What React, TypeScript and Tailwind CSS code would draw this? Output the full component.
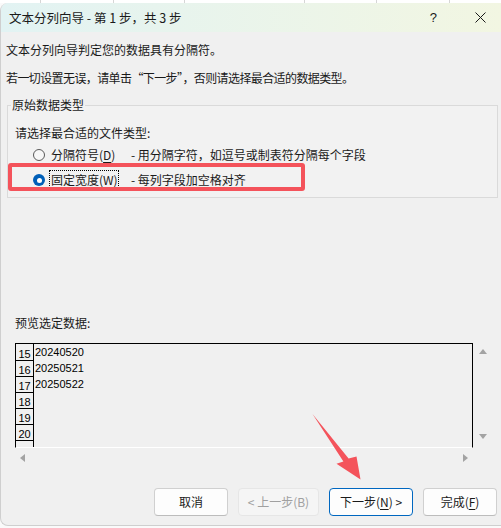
import React from 'react'

const cjk = "font-['Microsoft_YaHei','Noto_Sans_CJK_SC',sans-serif]"

const Radio: React.FC<{ checked?: boolean }> = ({ checked }) =>
  checked ? (
    <span className="flex h-[12px] w-[12px] shrink-0 items-center justify-center rounded-full bg-[#005fb8]">
      <span className="h-[5px] w-[5px] rounded-full bg-white" />
    </span>
  ) : (
    <span className="h-[12px] w-[12px] shrink-0 rounded-full border border-[#5a5a5a] bg-[#f7f7f7]" />
  )

const Tri: React.FC<{ dir: 'up' | 'down' | 'left' | 'right' }> = ({ dir }) => {
  const pts = {
    up: '0,5 4,0 8,5',
    down: '0,0 8,0 4,5',
    left: '5,0 5,8 0,4',
    right: '0,0 0,8 5,4',
  }[dir]
  const w = dir === 'up' || dir === 'down' ? 8 : 5
  const h = dir === 'up' || dir === 'down' ? 5 : 8
  return (
    <svg width={w} height={h} viewBox={`0 0 ${w} ${h}`}>
      <polygon points={pts} fill="#a3a3a3" />
    </svg>
  )
}

const rows = [
  { n: '15', v: '20240520' },
  { n: '16', v: '20250521' },
  { n: '17', v: '20250522' },
  { n: '18', v: '' },
  { n: '19', v: '' },
  { n: '20', v: '' },
  { n: '', v: '' },
]

export default function App() {
  return (
    <div className={`relative h-[528px] w-[501px] overflow-hidden bg-[#fafafa] text-[12px] text-[#1a1a1a] ${cjk}`}>
      {/* spreadsheet behind */}
      <div className="flex h-[3px] bg-white">
        <div className="w-[41px] border-r border-[#d6d6d6]" />
        <div className="w-[73px] border-r border-[#d6d6d6]" />
        <div className="w-[71px] border-r border-[#d6d6d6]" />
        <div className="w-[120px] border-r border-[#d6d6d6]" />
        <div className="w-[72px] border-r border-[#d6d6d6]" />
        <div className="w-[73px] border-r border-[#d6d6d6]" />
      </div>

      <div className="flex h-[523px] w-[501px] flex-col overflow-hidden rounded-l-[8px] border-l border-b border-[#cfcfcf] bg-[#f0f0f0]">
        {/* title bar */}
        <div className="flex h-[29px] shrink-0 items-center bg-linear-to-r from-[#e2f3f3] to-[#f2f6e2] pl-[8px]">
          <span className="text-[12.5px] leading-[16px]">文本分列向导 - 第 1 步，共 3 步</span>
          <span className="ml-auto mr-[38px] font-['Liberation_Sans',sans-serif] text-[13px]">?</span>
          <svg width="11" height="11" viewBox="0 0 11 11" className="mr-[15px]">
            <path d="M0.5 0.5L10.5 10.5M10.5 0.5L0.5 10.5" stroke="#1a1a1a" strokeWidth="1" />
          </svg>
        </div>

        <div className="mt-[10px] pl-[5px] leading-[16px]">文本分列向导判定您的数据具有分隔符。</div>
        <div className="mt-[12px] pl-[5px] leading-[16px] tracking-[-0.6px]">若一切设置无误，请单击“下一步”，否则请选择最合适的数据类型。</div>

        <fieldset className="ml-[6px] mt-[9px] w-[491px] border border-[#dadada] bg-[#f2f2f2] pb-[7px]">
          <legend className="ml-[3px] px-[1px] leading-[20px]">原始数据类型</legend>
          <div className="mt-[10px] pl-[7px] leading-[16px]">请选择最合适的文件类型:</div>
          <div className="mt-[4px] flex h-[20px] items-center whitespace-nowrap pl-[25px]">
            <Radio />
            <span className="ml-[4px] block h-[20px] w-[70px] shrink-0 border border-transparent px-[1px] leading-[18px]">
              分隔符号(<span className="underline underline-offset-2">D</span>)
            </span>
            <span className="ml-[12px]">- 用分隔字符，如逗号或制表符分隔每个字段</span>
          </div>
          <div className="relative mt-[5px] flex h-[20px] items-center whitespace-nowrap pl-[25px]">
            <Radio checked />
            <span className="ml-[4px] block h-[20px] w-[70px] shrink-0 border border-dotted border-black px-[1px] leading-[18px]">
              固定宽度(<span className="underline underline-offset-2">W</span>)
            </span>
            <span className="ml-[12px]">- 每列字段加空格对齐</span>
            <div className="pointer-events-none absolute left-0 top-[-7px] h-[28px] w-[297px] rounded-[3px] border-[4px] border-[#f4535b]" />
          </div>
        </fieldset>

        <div className="mt-[117px] pl-[14px] leading-[16px]">预览选定数据:</div>

        {/* preview */}
        <div className="ml-[14px] mt-[12px] flex w-[477px] flex-col">
          <div className="flex">
            <div className="flex h-[105px] w-[458px] overflow-hidden border-x border-t border-b border-x-black border-t-black border-b-white font-['Liberation_Sans',sans-serif] text-[11px] text-black">
              <div className="flex w-[18px] shrink-0 flex-col border-r border-black">
                {rows.map((r, i) => (
                  <div
                    key={i}
                    className={`flex shrink-0 items-end justify-center border-b border-black leading-[11px] ${i === 0 ? 'h-[17px]' : 'h-[16px]'}`}
                  >
                    {r.n}
                  </div>
                ))}
              </div>
              <div className="flex flex-col pl-[1px]">
                {rows.map((r, i) => (
                  <div key={i} className="h-[16px] leading-[16px]">
                    {r.v}
                  </div>
                ))}
              </div>
            </div>
            <div className="flex w-[19px] flex-col items-center justify-between pb-[9px] pt-[6px]">
              <Tri dir="up" />
              <Tri dir="down" />
            </div>
          </div>
          <div className="flex h-[19px] w-[458px] items-center justify-between pl-[5px] pr-[5px]">
            <Tri dir="left" />
            <Tri dir="right" />
          </div>
        </div>

        {/* buttons */}
        <div className="mt-[21px] flex justify-end gap-[10px] pr-[4px]">
          <button className="h-[28px] w-[74px] rounded-[4px] border border-[#d0d0d0] border-b-[#bcbcbc] bg-[#fdfdfd]">取消</button>
          <button className="h-[28px] w-[81px] rounded-[4px] border border-[#e6e6e6] bg-[#f5f5f5] text-[#a0a0a0]">&lt; 上一步(B)</button>
          <button className="h-[28px] w-[84px] rounded-[4px] border-[1.5px] border-[#0067c0] bg-[#fdfdfd]">
            下一步(<span className="underline underline-offset-2">N</span>) &gt;
          </button>
          <button className="h-[28px] w-[74px] rounded-[4px] border border-[#d0d0d0] border-b-[#bcbcbc] bg-[#fdfdfd]">
            完成(<span className="underline underline-offset-2">F</span>)
          </button>
        </div>
      </div>

      {/* annotation arrow */}
      <svg className="pointer-events-none absolute left-0 top-0" width="501" height="528" viewBox="0 0 501 528">
        <polygon
          points="312.5,414 348.6,458.4 356.5,456.5 360.5,479.5 336.5,463.8 343.4,461.6"
          fill="#f4535b"
        />
      </svg>
    </div>
  )
}
